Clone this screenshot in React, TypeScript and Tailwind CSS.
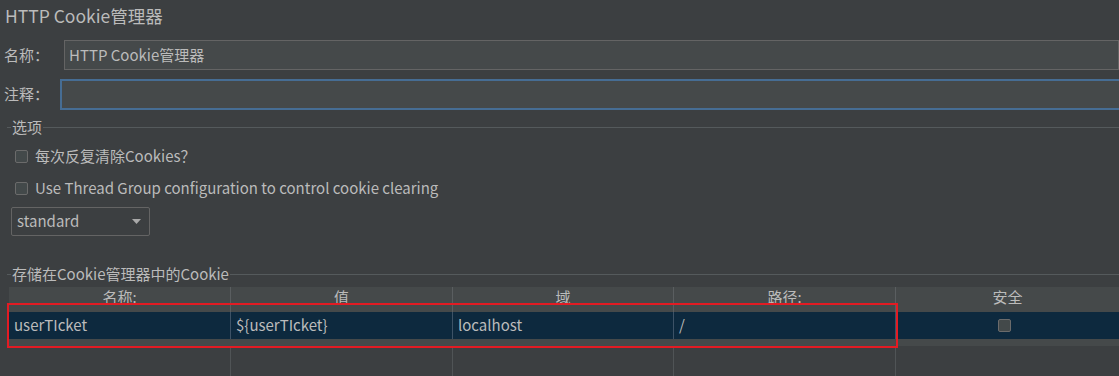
import React from 'react'

const FONT = '"Noto Sans CJK SC", "Noto Sans", sans-serif'

const columns = [
  { title: '名称:', width: 'w-[222px]' },
  { title: '值', width: 'w-[222px]' },
  { title: '域', width: 'w-[221px]' },
  { title: '路径:', width: 'w-[222px]' },
  { title: '安全', width: 'flex-1' },
]

const row = ['userTIcket', '${userTIcket}', 'localhost', '/']

// Unchecked darcula-style checkbox
const Box = () => (
  <span className="block w-[13px] h-[13px] shrink-0 rounded-[2px] border border-[#6b6b6b] bg-[#43494a]" />
)

// Titled border used for the option groups
const GroupTitle = ({ text }: { text: string }) => (
  <div className="flex items-center h-[18px]">
    <div className="w-[4px] h-px bg-[#555a5c] ml-[7px]" />
    <span className="px-px text-[15px] leading-[18px]">{text}</span>
    <div className="flex-1 h-px bg-[#555a5c]" />
  </div>
)

export default function App() {
  return (
    <div
      className="relative w-[1119px] h-[376px] overflow-hidden bg-[#3c3f41] text-[#bbbbbb]"
      style={{ fontFamily: FONT }}
    >
      {/* Title */}
      <div className="h-[40px] pl-[5px] pt-[2px] text-[17.5px] leading-[28px]">HTTP Cookie管理器</div>

      {/* Name */}
      <div className="flex items-center h-[30px]">
        <span className="w-[64px] shrink-0 pl-[4px] text-[15px]">名称：</span>
        <div className="flex-1 h-[30px] border border-[#646464] bg-[#45494a] flex items-center pl-[4px] text-[15px]">
          HTTP Cookie管理器
        </div>
      </div>

      {/* Comment */}
      <div className="flex items-center h-[31px] mt-[9px]">
        <span className="w-[60px] shrink-0 pl-[4px] text-[15px]">注释：</span>
        <div className="flex-1 -mr-[4px] h-[31px] border-2 border-[#466d94] bg-[#45494a]" />
      </div>

      {/* Options group */}
      <div className="mt-[8px]">
        <GroupTitle text="选项" />
        <div className="flex items-center gap-[7px] pl-[15px] mt-[10px] h-[20px] text-[15px]">
          <Box />
          <span>每次反复清除Cookies？</span>
        </div>
        <div className="flex items-center gap-[7px] pl-[15px] mt-[12px] h-[20px] text-[15px]">
          <Box />
          <span>Use Thread Group configuration to control cookie clearing</span>
        </div>
        <div className="ml-[11px] mt-[9px] w-[139px] h-[29px] border border-[#646464] rounded-[2px] flex items-center justify-between pl-[5px] pr-[8px] text-[15px]">
          <span>standard</span>
          <svg width="9" height="5" viewBox="0 0 9 5">
            <path d="M0 0H9L4.5 5Z" fill="#a9a9a9" />
          </svg>
        </div>
      </div>

      {/* Cookies group */}
      <div className="mt-[29px]">
        <GroupTitle text="存储在Cookie管理器中的Cookie" />
        <div className="ml-[9px] mt-[4px] flex flex-col h-[90px]">
          <div className="flex h-[25px] bg-[#45494a]">
            {columns.map((c, i) => (
              <div
                key={c.title}
                className={`${c.width} ${i < 4 ? 'border-r border-[#5a5e60]' : ''} text-center text-[15px] leading-[20px]`}
              >
                {c.title}
              </div>
            ))}
          </div>
          <div className="flex h-[27px] bg-[#0d293e] border-b-[7px] border-[#45494a] box-content">
            {row.map((v, i) => (
              <div
                key={i}
                className={`${columns[i].width} border-r border-[#3d5266] pl-[5px] flex items-center text-[15px]`}
              >
                {v}
              </div>
            ))}
            <div className="flex-1 flex items-center justify-center pr-[6px]">
              <Box />
            </div>
          </div>
          <div className="flex flex-1">
            {columns.map((c, i) => (
              <div key={c.title} className={`${c.width} ${i < 4 ? 'border-r border-[#505456]' : ''}`} />
            ))}
          </div>
        </div>
      </div>

      {/* Red annotation frame */}
      <div className="absolute left-[7px] top-[303px] w-[891px] h-[45px] border-2 border-[#e31b23]" />
    </div>
  )
}
